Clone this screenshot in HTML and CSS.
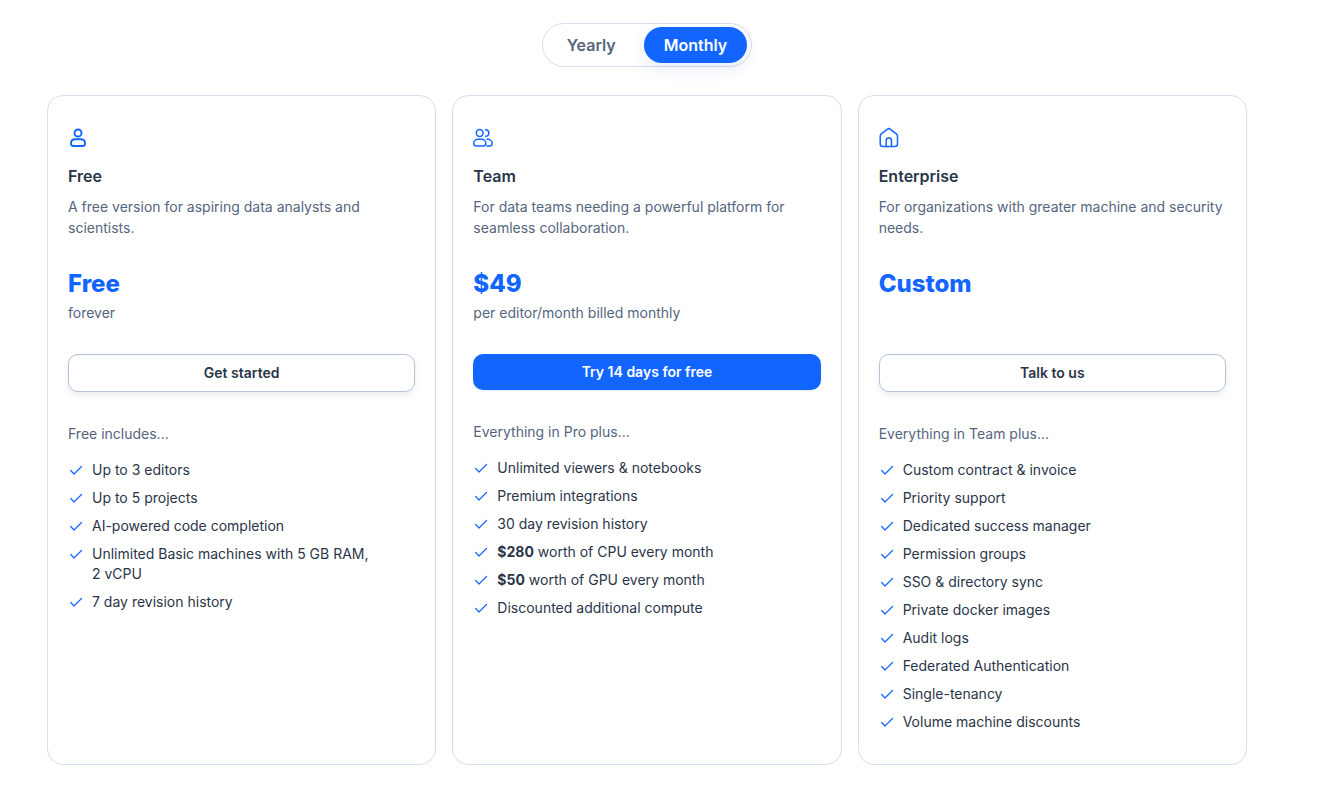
FILE: index.html
```html
<!DOCTYPE html>
<html lang="en">
<head>
<meta charset="utf-8">
<meta name="viewport" content="width=device-width, initial-scale=1">
<title>Pricing</title>
<link rel="stylesheet" href="styles.css">
</head>
<body>
<svg class="sprite" aria-hidden="true">
  <symbol id="check" viewBox="0 0 16 16"><path d="M2.700 8.500 6 12 13.500 4.500"/></symbol>
</svg>
<main class="pricing">
  <div class="toggle" role="group" aria-label="Billing period">
    <button class="toggle-option" type="button" aria-pressed="false">Yearly</button>
    <button class="toggle-option active" type="button" aria-pressed="true">Monthly</button>
  </div>
  <div class="plans">
    <section class="plan">
      <svg class="plan-icon bold" viewBox="0 0 20 20" aria-hidden="true"><circle cx="10" cy="5" r="3.500"/><path d="M7.200 11.300h5.600c2.500 0 4.200 1.700 4.200 3.900 0 1.700-.9 2.800-2.300 2.800H5.300C3.900 18 3 16.900 3 15.200c0-2.200 1.700-3.900 4.200-3.900z"/></svg>
      <h2 class="plan-name">Free</h2>
      <p class="plan-text">A free version for aspiring data analysts and scientists.</p>
      <p class="price">Free</p>
      <p class="period">forever</p>
      <button class="cta" type="button">Get started</button>
      <p class="includes">Free includes...</p>
      <ul class="features">
        <li><svg class="check"><use href="#check"/></svg><span>Up to 3 editors</span></li>
        <li><svg class="check"><use href="#check"/></svg><span>Up to 5 projects</span></li>
        <li><svg class="check"><use href="#check"/></svg><span>AI-powered code completion</span></li>
        <li><svg class="check"><use href="#check"/></svg><span>Unlimited Basic machines with 5 GB RAM, 2&nbsp;vCPU</span></li>
        <li><svg class="check"><use href="#check"/></svg><span>7 day revision history</span></li>
      </ul>
    </section>
    <section class="plan">
      <svg class="plan-icon" viewBox="0 0 20 20" aria-hidden="true"><circle cx="6.700" cy="5" r="3.400"/><path d="M4.900 11.300h3.500c2.600 0 4.400 1.800 4.400 4 0 1.500-1 2.700-2.500 2.700H3.200C1.700 18 .7 16.800.7 15.300c0-2.200 1.800-4 4.200-4z"/><path d="M12.500 1.700a3.300 3.300 0 0 1 0 6.600"/><path d="M14 11.300h.8c2.500 0 4.400 1.800 4.400 4 0 1.500-1 2.700-2.500 2.700H14"/></svg>
      <h2 class="plan-name">Team</h2>
      <p class="plan-text">For data teams needing a powerful platform for seamless collaboration.</p>
      <p class="price">$49</p>
      <p class="period">per editor/month billed monthly</p>
      <button class="cta primary" type="button">Try 14 days for free</button>
      <p class="includes">Everything in Pro plus...</p>
      <ul class="features">
        <li><svg class="check"><use href="#check"/></svg><span>Unlimited viewers &amp; notebooks</span></li>
        <li><svg class="check"><use href="#check"/></svg><span>Premium integrations</span></li>
        <li><svg class="check"><use href="#check"/></svg><span>30 day revision history</span></li>
        <li><svg class="check"><use href="#check"/></svg><span><strong>$280</strong> worth of CPU every month</span></li>
        <li><svg class="check"><use href="#check"/></svg><span><strong>$50</strong> worth of GPU every month</span></li>
        <li><svg class="check"><use href="#check"/></svg><span>Discounted additional compute</span></li>
      </ul>
    </section>
    <section class="plan">
      <svg class="plan-icon" viewBox="0 0 20 20" aria-hidden="true"><path d="M8.500 1.200 2.600 5.700C1.600 6.500 1.200 7.300 1.200 8.300v7.400c0 1.600 1.200 2.800 2.700 2.800h11.800c1.600 0 2.800-1.200 2.800-2.800V8.300c0-1-.4-1.800-1.400-2.600L11.200 1.200c-.8-.7-1.900-.7-2.700 0z"/><path d="M7.200 18.400v-6c0-1.500 1-2.500 2.600-2.500s2.700 1 2.700 2.500v6"/></svg>
      <h2 class="plan-name">Enterprise</h2>
      <p class="plan-text">For organizations with greater machine and security needs.</p>
      <p class="price">Custom</p>
      <p class="period"></p>
      <button class="cta" type="button">Talk to us</button>
      <p class="includes">Everything in Team plus...</p>
      <ul class="features">
        <li><svg class="check"><use href="#check"/></svg><span>Custom contract &amp; invoice</span></li>
        <li><svg class="check"><use href="#check"/></svg><span>Priority support</span></li>
        <li><svg class="check"><use href="#check"/></svg><span>Dedicated success manager</span></li>
        <li><svg class="check"><use href="#check"/></svg><span>Permission groups</span></li>
        <li><svg class="check"><use href="#check"/></svg><span>SSO &amp; directory sync</span></li>
        <li><svg class="check"><use href="#check"/></svg><span>Private docker images</span></li>
        <li><svg class="check"><use href="#check"/></svg><span>Audit logs</span></li>
        <li><svg class="check"><use href="#check"/></svg><span>Federated Authentication</span></li>
        <li><svg class="check"><use href="#check"/></svg><span>Single-tenancy</span></li>
        <li><svg class="check"><use href="#check"/></svg><span>Volume machine discounts</span></li>
      </ul>
    </section>
  </div>
</main>
</body>
</html>
```
FILE: styles.css
```css
:root {
  --blue: #1266ff;
  --ink: #2a3548;
  --muted: #56657e;
  --line: #d6dfed;
}

* { box-sizing: border-box; }

body {
  margin: 0;
  background: #fff;
  color: var(--ink);
  font: 400 14px/20px Inter, "Liberation Sans", sans-serif;
}

h2, p, ul { margin: 0; }

button { font: inherit; cursor: pointer; }

.sprite { display: none; }

.pricing {
  display: flex;
  flex-direction: column;
  align-items: center;
  gap: 28px;
  padding: 23px 91px 27px 47px;
}

.toggle {
  display: flex;
  gap: 8px;
  padding: 3px 4px;
  border: 1px solid var(--line);
  border-radius: 22px;
}

.toggle-option {
  padding: 6px 20px;
  border: 0;
  border-radius: 18px;
  background: transparent;
  color: var(--muted);
  font-size: 16px;
  font-weight: 600;
  line-height: 24px;
}

.toggle-option.active {
  background: var(--blue);
  color: #fff;
  box-shadow: 0 6px 16px rgba(40, 90, 180, 0.12);
}

.plans {
  display: grid;
  grid-template-columns: repeat(3, minmax(0, 1fr));
  gap: 16px;
  width: 100%;
}

.plan {
  display: flex;
  flex-direction: column;
  padding: 32px 20px;
  border: 1px solid var(--line);
  border-radius: 16px;
}

.plan-icon {
  width: 20px;
  height: 20px;
  overflow: visible;
  fill: none;
  stroke: var(--blue);
  stroke-width: 1.5;
  stroke-linecap: round;
}

.plan-icon.bold { stroke-width: 1.9; }

.plan-name {
  margin-top: 16px;
  font-size: 16px;
  font-weight: 600;
  line-height: 24px;
}

.plan-text {
  margin-top: 8px;
  color: var(--muted);
  line-height: 21px;
}

.price {
  margin-top: 30px;
  color: var(--blue);
  font-size: 24px;
  font-weight: 800;
  line-height: 32px;
}

.period {
  min-height: 20px;
  margin-top: 3px;
  color: var(--muted);
}

.cta {
  margin-top: 31px;
  padding: 8px 16px;
  border: 1px solid #b5c3da;
  border-radius: 10px;
  background: #fff;
  color: var(--ink);
  font-weight: 600;
  box-shadow: 0 3px 6px rgba(40, 70, 120, 0.1);
}

.cta.primary {
  border: 0;
  background: var(--blue);
  color: #fff;
  box-shadow: 0 1px 2px rgba(40, 70, 120, 0.1);
}

.includes {
  margin-top: 32px;
  color: var(--muted);
}

.features {
  display: flex;
  flex-direction: column;
  gap: 8px;
  margin-top: 16px;
  padding: 0 40px 0 0;
  list-style: none;
}

.features li {
  display: flex;
  gap: 8px;
}

.check {
  flex: none;
  width: 16px;
  height: 16px;
  margin-top: 2px;
  fill: none;
  stroke: var(--blue);
  stroke-width: 1.2;
  stroke-linecap: round;
  stroke-linejoin: round;
}
```
